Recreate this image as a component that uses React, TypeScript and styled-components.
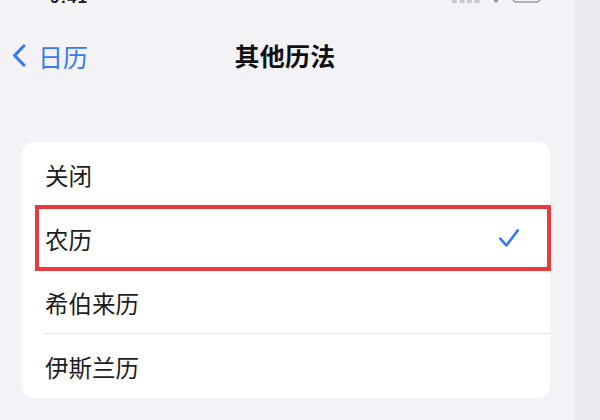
import styled, { createGlobalStyle } from 'styled-components';

const CALENDARS = ['关闭', '农历', '希伯来历', '伊斯兰历'];
const SELECTED = '农历';

const GlobalStyle = createGlobalStyle`
  html, body {
    margin: 0;
    padding: 0;
  }
  body {
    width: 600px;
    height: 420px;
    overflow: hidden;
    background: linear-gradient(to right, #f2f2f7 0, #f2f2f7 571px, #ebebef 577px);
    font-family: 'Noto Sans CJK SC', 'Noto Sans', sans-serif;
    -webkit-font-smoothing: antialiased;
  }
`;

export default function App() {
  return (
    <>
      <GlobalStyle />
      <Page>
        <StatusBar>
          <Time>9:41</Time>
          <StatusIcons>
            <svg width='28' height='12' viewBox='0 0 28 12'>
              <rect x='0' y='8' width='5' height='4' rx='1' fill='#c7c7cc' />
              <rect x='7.5' y='6' width='5' height='6' rx='1' fill='#c7c7cc' />
              <rect x='15' y='3' width='5' height='9' rx='1' fill='#c7c7cc' />
              <rect x='22.5' y='0' width='5' height='12' rx='1' fill='#c7c7cc' />
            </svg>
            <svg width='16' height='12' viewBox='0 0 16 12'>
              <path d='M8 12 L5.5 9.2 A3.6 3.6 0 0 1 10.5 9.2 Z' fill='#8e8e93' />
            </svg>
            <svg width='30' height='12' viewBox='0 0 30 12'>
              <rect
                x='1'
                y='-6'
                width='27'
                height='17'
                rx='3.5'
                fill='none'
                stroke='#9a9aa0'
                strokeWidth='1.6'
              />
            </svg>
          </StatusIcons>
        </StatusBar>

        <NavBar>
          <BackButton>
            <svg width='14' height='23' viewBox='0 0 14 23'>
              <path
                d='M11.8 2 L2.6 11.5 L11.8 21'
                fill='none'
                stroke='#357bf0'
                strokeWidth='3.2'
                strokeLinecap='round'
                strokeLinejoin='round'
              />
            </svg>
            <span>日历</span>
          </BackButton>
          <Title>其他历法</Title>
          <span />
        </NavBar>

        <Card>
          {CALENDARS.map((name, i) => (
            <Row key={name} $last={i === CALENDARS.length - 1}>
              <RowLabel>{name}</RowLabel>
              {name === SELECTED && (
                <>
                  <svg width='22' height='20' viewBox='0 0 22 20'>
                    <path
                      d='M2.2 10.6 L8.4 17.4 L19.8 2.4'
                      fill='none'
                      stroke='#357bf0'
                      strokeWidth='2.6'
                      strokeLinecap='round'
                      strokeLinejoin='round'
                    />
                  </svg>
                  <Highlight />
                </>
              )}
            </Row>
          ))}
        </Card>
      </Page>
    </>
  );
}

const Page = styled.div`
  display: flex;
  flex-direction: column;
  width: 600px;
  height: 420px;
`;

const StatusBar = styled.div`
  display: flex;
  justify-content: space-between;
  align-items: flex-end;
  width: 570px;
  height: 4px;
  overflow: hidden;
  padding: 0 28px 0 50px;
  box-sizing: border-box;
`;

const Time = styled.span`
  font-family: 'Liberation Sans', sans-serif;
  font-size: 17px;
  font-weight: 700;
  line-height: 17px;
  margin-bottom: -2px;
  color: #1c1c1e;
  letter-spacing: 1px;
`;

const StatusIcons = styled.div`
  display: flex;
  align-items: flex-end;
  gap: 8px;
  margin-bottom: 1px;

  svg {
    display: block;
  }
`;

const NavBar = styled.div`
  display: grid;
  grid-template-columns: 1fr auto 1fr;
  align-items: center;
  width: 570px;
  height: 44px;
  margin-top: 29px;
`;

const BackButton = styled.div`
  display: flex;
  align-items: center;
  gap: 12px;
  padding-left: 12px;
  color: #357bf0;
  font-size: 25px;
  line-height: 1;

  svg {
    display: block;
    margin-top: 1px;
  }

  span {
    margin-top: 2px;
  }
`;

const Title = styled.div`
  font-size: 25px;
  font-weight: 700;
  line-height: 1;
  color: #111111;
  letter-spacing: 0.3px;
`;

const Card = styled.div`
  width: 528px;
  margin: 65px 0 0 22px;
  background: #ffffff;
  border-radius: 12px;
`;

const Row = styled.div<{ $last?: boolean }>`
  position: relative;
  display: flex;
  align-items: center;
  justify-content: space-between;
  height: 64px;
  padding: 0 30px 0 23px;

  &::after {
    content: '';
    display: ${({ $last }) => ($last ? 'none' : 'block')};
    position: absolute;
    left: 23px;
    right: 0;
    bottom: 0;
    height: 1px;
    background: #e3e3e6;
  }

  svg {
    display: block;
  }
`;

const RowLabel = styled.span`
  font-size: 23.5px;
  line-height: 1;
  color: #1d1d1f;
  margin-top: 3px;
`;

const Highlight = styled.div`
  position: absolute;
  top: -1px;
  bottom: -1px;
  left: 13px;
  right: -1px;
  border: 4px solid #ea3a3d;
  z-index: 1;
`;
